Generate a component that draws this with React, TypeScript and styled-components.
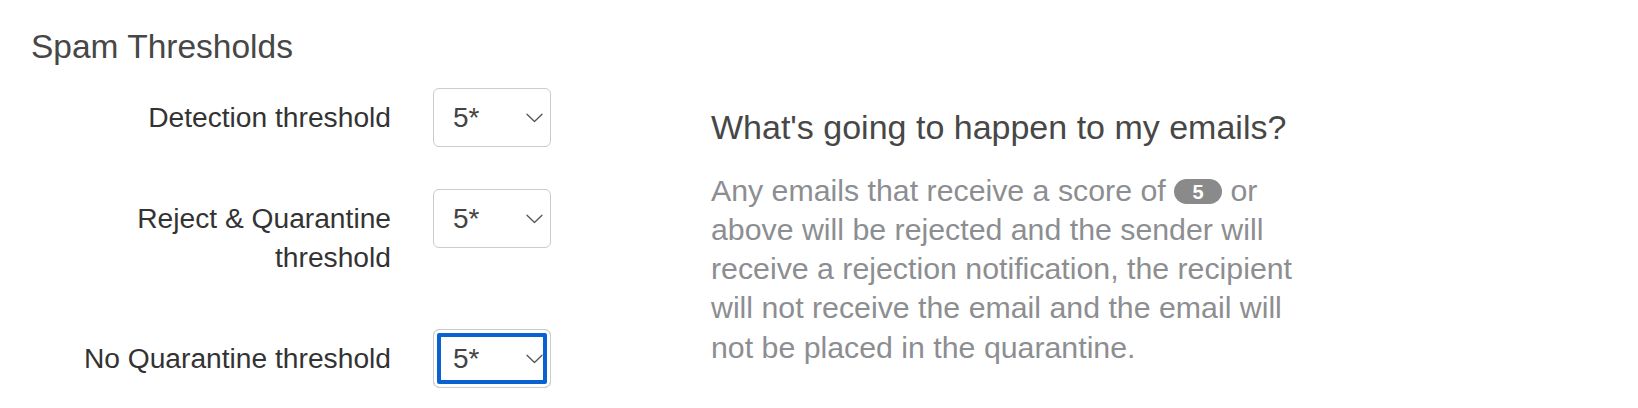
import React, { useState, ChangeEvent } from 'react';
import styled, { createGlobalStyle } from 'styled-components';

const GlobalStyle = createGlobalStyle`
    html, body {
        margin: 0;
        padding: 0;
        background: #fff;
    }

    body {
        font-family: "Liberation Sans", Helvetica, Arial, sans-serif;
        color: #333;
    }
`

const Page = styled.section`
    padding: 27px 0 0 31px;
`

const Title = styled.h2`
    margin: 0;
    font-size: 33.5px;
    line-height: 40.8px;
    font-weight: 300;
    color: #474747;
`

const Content = styled.div`
    display: flex;
    align-items: flex-start;
    gap: 160px;
    margin-top: 20px;
`

const Form = styled.div`
    display: grid;
    grid-template-columns: 360px 118px;
    column-gap: 42px;
    row-gap: 42px;
    align-items: start;
`

const Label = styled.label`
    text-align: right;
    font-size: 28.2px;
    line-height: 39px;
    padding: 10px 0;
    color: #333;
`

const SelectBox = styled.div`
    position: relative;
    width: 118px;
    height: 59px;
`

const Select = styled.select<{ $focused?: boolean }>`
    appearance: none;
    -webkit-appearance: none;
    box-sizing: border-box;
    width: 100%;
    height: 100%;
    margin: 0;
    padding: 0 0 0 19px;
    border: 1px solid #cbcbcb;
    border-radius: 6px;
    background: #fff;
    font-family: inherit;
    font-size: 28px;
    color: #444;
    outline: none;
    box-shadow: ${p => p.$focused ? 'inset 0 0 0 3px #fff, inset 0 0 0 7px #0a62d0' : 'none'};
`

const Chevron = styled.svg`
    position: absolute;
    right: 8px;
    top: 25px;
    width: 17px;
    height: 10px;
    pointer-events: none;
`

const Info = styled.div`
    width: 600px;
    padding-top: 19px;
`

const InfoTitle = styled.h4`
    margin: 0 0 23px;
    font-size: 34px;
    line-height: 40.8px;
    font-weight: 300;
    color: #474747;
`

const InfoText = styled.p`
    margin: 0;
    font-size: 30.3px;
    line-height: 39.3px;
    color: #8c8e91;
`

const Badge = styled.span`
    display: inline-block;
    width: 48px;
    height: 25px;
    line-height: 26px;
    border-radius: 13px;
    background: #8a8a8a;
    color: #fff;
    font-size: 20px;
    font-weight: 700;
    text-align: center;
    vertical-align: 2px;
`

type Threshold = {
    id: string;
    label: string;
    focused?: boolean;
};

const thresholds: Threshold[] = [
    { id: 'detection', label: 'Detection threshold' },
    { id: 'reject', label: 'Reject & Quarantine threshold' },
    { id: 'noQuarantine', label: 'No Quarantine threshold', focused: true },
];

const options = ['1', '2', '3', '4', '5*', '6', '7', '8', '9', '10'];

const ThresholdSelect: React.FC<{ id: string; focused?: boolean; value: string; onChange: (v: string) => void }> = ({ id, focused, value, onChange }) => {
    const handleChange = (event: ChangeEvent<HTMLSelectElement>) => {
        onChange(event.target.value);
    };

    return (
        <SelectBox>
            <Select id={id} $focused={focused} value={value} onChange={handleChange}>
                {options.map(o => <option key={o} value={o}>{o}</option>)}
            </Select>
            <Chevron viewBox="0 0 17 10" fill="none">
                <path d="M1 1.2 L8.5 8.5 L16 1.2" stroke="#555" strokeWidth="1.3" strokeLinecap="round" strokeLinejoin="round" />
            </Chevron>
        </SelectBox>
    );
};

const App: React.FC = () => {
    const [values, setValues] = useState<Record<string, string>>({
        detection: '5*',
        reject: '5*',
        noQuarantine: '5*',
    });

    return (
        <Page>
            <GlobalStyle />
            <Title>Spam Thresholds</Title>
            <Content>
                <Form>
                    {thresholds.map(t => (
                        <React.Fragment key={t.id}>
                            <Label htmlFor={t.id}>{t.label}</Label>
                            <ThresholdSelect
                                id={t.id}
                                focused={t.focused}
                                value={values[t.id]}
                                onChange={v => setValues({ ...values, [t.id]: v })}
                            />
                        </React.Fragment>
                    ))}
                </Form>
                <Info>
                    <InfoTitle>What's going to happen to my emails?</InfoTitle>
                    <InfoText>
                        Any emails that receive a score of <Badge>5</Badge> or above will be rejected and the
                        sender will receive a rejection notification, the recipient will not receive the email
                        and the email will not be placed in the quarantine.
                    </InfoText>
                </Info>
            </Content>
        </Page>
    );
};

export default App;
